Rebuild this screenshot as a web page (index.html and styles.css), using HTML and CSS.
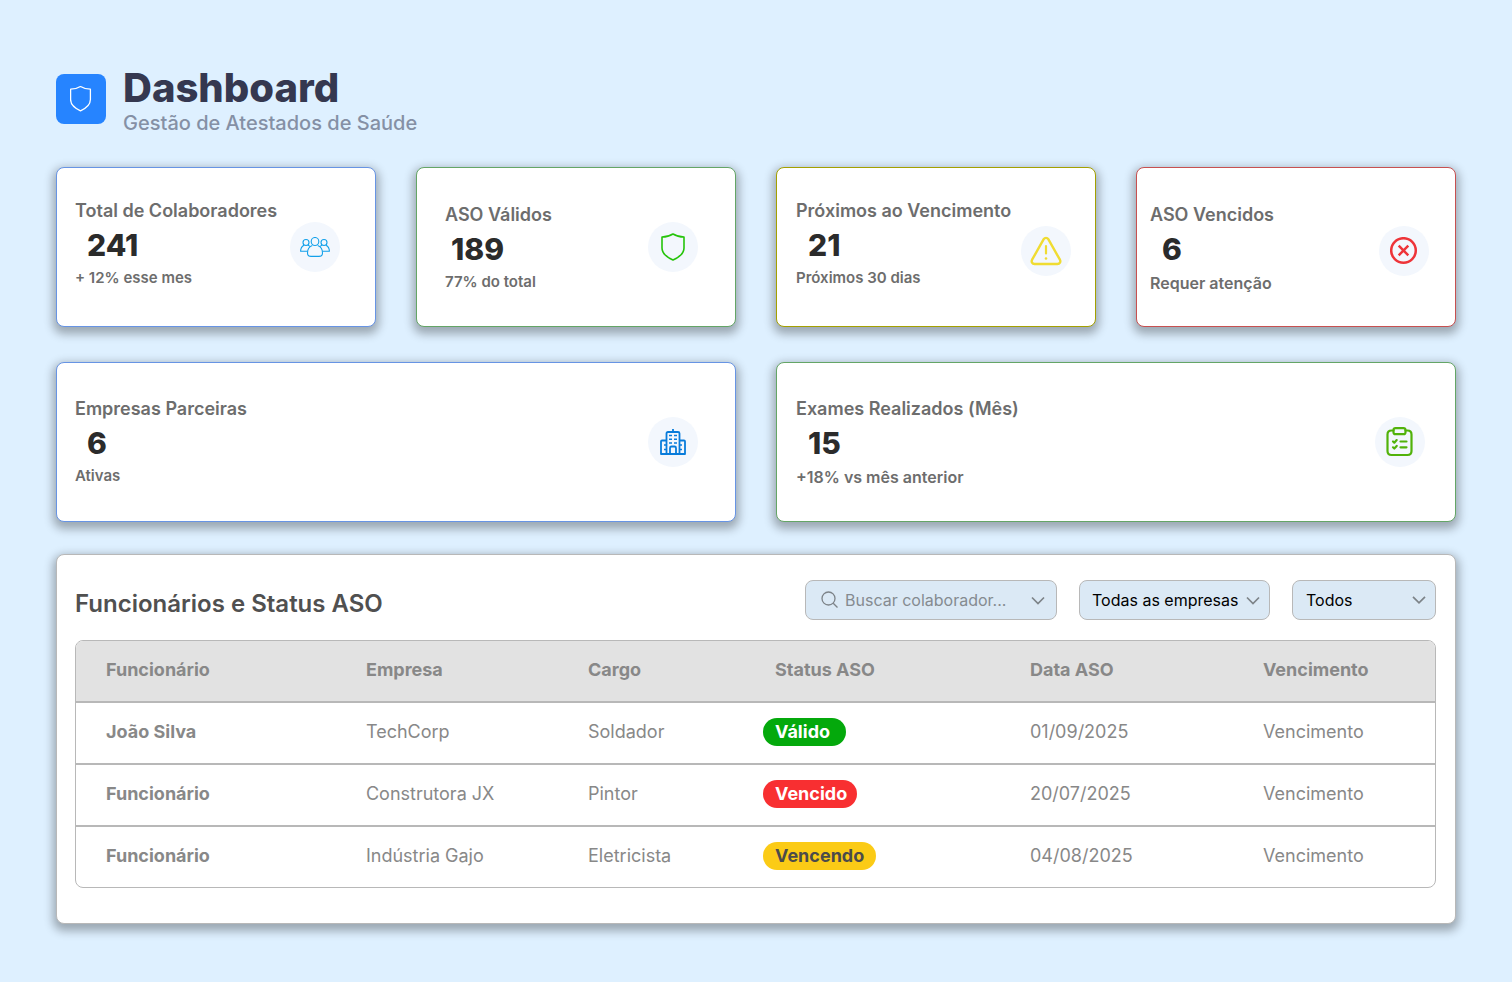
FILE: index.html
```html
<!DOCTYPE html>
<html lang="pt-BR">
<head>
<meta charset="utf-8">
<meta name="viewport" content="width=device-width, initial-scale=1">
<title>Dashboard</title>
<link rel="stylesheet" href="styles.css">
</head>
<body>
<main class="page">
  <header class="header">
    <div class="logo">
      <svg width="22" height="26" viewBox="0 0 22 26" fill="none" stroke="#fff" stroke-width="1.3" stroke-linejoin="round"><path d="M10.500.5C7.700 2.200 4.300 3.200.6 3.200V13.500c0 5.500 4.400 8.800 9.900 11.300C16 22.300 20.400 19 20.400 13.500V3.200C16.700 3.200 13.300 2.200 10.500.5z"/></svg>
    </div>
    <div>
      <h1 class="title">Dashboard</h1>
      <p class="subtitle">Gestão de Atestados de Saúde</p>
    </div>
  </header>

  <section class="cards">
    <article class="card card--blue card--total">
      <div class="info">
        <h2 class="label">Total de Colaboradores</h2>
        <p class="value">241</p>
        <p class="note">+ 12% esse mes</p>
      </div>
      <span class="badge-icon">
        <svg width="30" height="20" viewBox="0 0 30 20" fill="none" stroke="#12a0ea" stroke-width="1.1" stroke-linejoin="round"><ellipse cx="15" cy="4.500" rx="3.800" ry="4"/><circle cx="6" cy="5.500" r="3"/><circle cx="24" cy="5.500" r="3"/><path d="M12.300 8.600C9.500 9.700 7.500 12.500 7.500 16c0 2.200 1.300 3.400 3.500 3.400h8c2.200 0 3.500-1.200 3.500-3.400 0-3.500-2-6.300-4.800-7.400"/><path d="M4 8.200C2 9.200.6 11.200.6 14.300h7M8 8.200c1 .4 1.700.9 2.300 1.500M26 8.200c2 1 3.400 3 3.400 6.100h-7M22 8.200c-1 .4-1.700.9-2.300 1.500"/></svg>
      </span>
    </article>
    <article class="card card--green card--valid">
      <div class="info">
        <h2 class="label">ASO Válidos</h2>
        <p class="value">189</p>
        <p class="note">77% do total</p>
      </div>
      <span class="badge-icon">
        <svg width="24" height="28" viewBox="0 0 24 28" fill="none" stroke="#25c40a" stroke-width="1.600" stroke-linejoin="round"><path d="M12 1C9 2.900 5.200 4 1 4V15c0 6 5 9.300 11 12 6-2.700 11-6 11-12V4C18.800 4 15 2.900 12 1z"/></svg>
      </span>
    </article>
    <article class="card card--yellow card--soon">
      <div class="info">
        <h2 class="label">Próximos ao Vencimento</h2>
        <p class="value">21</p>
        <p class="note">Próximos 30 dias</p>
      </div>
      <span class="badge-icon badge-icon--low">
        <svg width="32" height="30" viewBox="0 0 32 30" fill="none" stroke="#f0dc32" stroke-width="2.400" stroke-linecap="round" stroke-linejoin="round"><path d="M13.700 3.200 2.100 23.700C1 25.900 2.200 28 4.600 28h22.800c2.400 0 3.600-2.100 2.500-4.300L18.300 3.200c-1.100-1.800-3.500-1.800-4.600 0z"/><path d="M16 10v7.500" stroke-width="2.200"/><circle cx="16" cy="22.500" r="1.300" fill="#f0dc32" stroke="none"/></svg>
      </span>
    </article>
    <article class="card card--red card--expired">
      <div class="info">
        <h2 class="label">ASO Vencidos</h2>
        <p class="value">6</p>
        <p class="note note--large">Requer atenção</p>
      </div>
      <span class="badge-icon badge-icon--low">
        <svg width="28" height="28" viewBox="0 0 28 28" fill="none" stroke="#ee3439" stroke-width="2.500"><circle cx="13.500" cy="13.500" r="12.300"/><path d="m8.700 8.700 9.600 9.600M18.300 8.700l-9.600 9.600"/></svg>
      </span>
    </article>
    <article class="card card--wide card--blue card--partners">
      <div class="info">
        <h2 class="label">Empresas Parceiras</h2>
        <p class="value">6</p>
        <p class="note">Ativas</p>
      </div>
      <span class="badge-icon">
        <svg width="26" height="26" viewBox="0 0 26 26" fill="none" stroke="#087cdb" stroke-width="1.800" stroke-linejoin="round"><path d="M13 0v3M6.500 25V4.500Q6.500 3 8 3h10q1.500 0 1.500 1.500V25M6.500 11.500H2q-1 0-1 1V25h24V12.500q0-1-1-1h-4.500M10 25v-6q0-1.500 1.500-1.500h3q1.500 0 1.500 1.500v6"/><path d="M9 6.500h3m2 0h3M9 10.300h3m2 0h3M9 14h3m2 0h3M4 16h2.500M4 20.500h2.500M22 16h-2.500M22 20.500h-2.500" stroke-width="1.500"/></svg>
      </span>
    </article>
    <article class="card card--wide card--green card--exams">
      <div class="info">
        <h2 class="label">Exames Realizados (Mês)</h2>
        <p class="value">15</p>
        <p class="note note--large">+18% vs mês anterior</p>
      </div>
      <span class="badge-icon">
        <svg width="28" height="30" viewBox="0 0 28 30" fill="none" stroke="#51b20a" stroke-width="2.200" stroke-linecap="round" stroke-linejoin="round"><path d="M7.500 3.500h-2Q1.500 3.500 1.500 7.500v16.500q0 4 4 4h16q4 0 4-4V7.500q0-4-4-4h-2"/><rect x="7.500" y="1.200" width="12" height="6" rx="2"/><path d="m7 14.500 1.300 1.200 2.400-2.600M7 20.300l1.300 1.200 2.400-2.600M14.500 14.500h6M14.500 20.300h6"/></svg>
      </span>
    </article>
  </section>

  <section class="panel">
    <div class="toolbar">
      <h2 class="panel-title">Funcionários e Status ASO</h2>
      <div class="filters">
        <div class="field field--search">
          <svg class="search-icon" width="18" height="18" viewBox="0 0 18 18" fill="none" stroke="#7d8388" stroke-width="1.300"><circle cx="7.500" cy="7.500" r="6.500"/><path d="m12.200 12.200 4.300 4.300"/></svg>
          <input class="search" type="text" placeholder="Buscar colaborador..." aria-label="Buscar colaborador">
          <svg class="chevron" width="14" height="10" viewBox="0 0 14 10" fill="none" stroke="#7d8388" stroke-width="1.700"><path d="m1 2.500 6 6 6-6"/></svg>
        </div>
        <div class="field field--company">
          <select class="select" aria-label="Empresa"><option>Todas as empresas</option></select>
          <svg class="chevron" width="14" height="10" viewBox="0 0 14 10" fill="none" stroke="#7d8388" stroke-width="1.700"><path d="m1 2.500 6 6 6-6"/></svg>
        </div>
        <div class="field field--status">
          <select class="select" aria-label="Status"><option>Todos</option></select>
          <svg class="chevron" width="14" height="8" viewBox="0 0 14 8" fill="none" stroke="#7d8388" stroke-width="1.700"><path d="m1 .8 6 6 6-6"/></svg>
        </div>
      </div>
    </div>
    <div class="table-box">
      <table class="table">
        <colgroup><col class="col-name"><col class="col-company"><col class="col-role"><col class="col-status"><col class="col-date"><col class="col-due"></colgroup>
        <thead>
          <tr><th scope="col">Funcionário</th><th scope="col">Empresa</th><th scope="col">Cargo</th><th scope="col" class="status-head">Status ASO</th><th scope="col">Data ASO</th><th scope="col">Vencimento</th></tr>
        </thead>
        <tbody>
          <tr><th scope="row">João Silva</th><td>TechCorp</td><td>Soldador</td><td><span class="pill pill--valid">Válido</span></td><td>01/09/2025</td><td>Vencimento</td></tr>
          <tr><th scope="row">Funcionário</th><td>Construtora JX</td><td>Pintor</td><td><span class="pill pill--expired">Vencido</span></td><td>20/07/2025</td><td>Vencimento</td></tr>
          <tr><th scope="row">Funcionário</th><td>Indústria Gajo</td><td>Eletricista</td><td><span class="pill pill--soon">Vencendo</span></td><td>04/08/2025</td><td>Vencimento</td></tr>
        </tbody>
      </table>
    </div>
  </section>
</main>
</body>
</html>
```

FILE: styles.css
```css
* {
  box-sizing: border-box;
}

body {
  margin: 0;
  background: #def0ff;
  font-family: Inter, "Liberation Sans", sans-serif;
}

h1, h2, p {
  margin: 0;
}

svg {
  display: block;
  flex: none;
}

.page {
  padding: 64px 56px 56px;
}

.header {
  display: flex;
  align-items: center;
  gap: 17px;
  margin-bottom: 33px;
}

.logo {
  display: grid;
  place-items: center;
  width: 50px;
  height: 50px;
  border-radius: 8px;
  background: #2684ff;
}

.title {
  font-size: 40px;
  line-height: 48px;
  font-weight: 800;
  color: #353850;
}

.subtitle {
  font-size: 20px;
  line-height: 22px;
  font-weight: 500;
  color: #8590a5;
}

.cards {
  display: grid;
  grid-template-columns: repeat(4, 1fr);
  gap: 35px 40px;
  margin-bottom: 32px;
}

.card,
.panel {
  border: 1px solid #b8b8b8;
  border-radius: 8px;
  background: #fff;
  box-shadow: 0 4px 10px 3px rgba(0, 0, 0, 0.3);
}

.card {
  display: flex;
  justify-content: space-between;
  min-height: 160px;
}

.card--wide {
  grid-column: span 2;
}

.card--blue { border-color: #6794e4; }
.card--green { border-color: #64a566; }
.card--yellow { border-color: #a4a000; }
.card--red { border-color: #c75050; }

.card--total { padding: 0 35px 0 18px; }
.card--valid { padding: 0 37px 0 28px; }
.card--soon { padding: 0 24px 0 19px; }
.card--expired { padding: 0 26px 0 13px; }
.card--partners { padding: 0 37px 0 18px; }
.card--exams { padding: 0 30px 0 19px; }

.info {
  padding-top: 29px;
}

.card--valid .info,
.card--expired .info {
  padding-top: 33px;
}

.card--wide .info {
  padding-top: 32px;
}

.label {
  font-size: 18px;
  line-height: 28px;
  font-weight: 600;
  color: #6d6d6d;
}

.value {
  padding-left: 12px;
  font-size: 30px;
  line-height: 40px;
  font-weight: 800;
  color: #2b2b2b;
}

.card--valid .value {
  padding-left: 6px;
}

.note {
  font-size: 15px;
  line-height: 26px;
  font-weight: 600;
  color: #6d6d6d;
}

.note--large {
  font-size: 16px;
  line-height: 28px;
}

.badge-icon {
  display: grid;
  place-items: center;
  align-self: center;
  width: 50px;
  height: 50px;
  border-radius: 50%;
  background: #f3f7fd;
}

.badge-icon--low {
  margin-top: 8px;
}

.panel {
  padding: 25px 19px 35px 18px;
}

.toolbar {
  display: flex;
  align-items: center;
  justify-content: space-between;
  margin-bottom: 20px;
}

.panel-title {
  padding-top: 8px;
  font-size: 24px;
  line-height: 30px;
  font-weight: 600;
  color: #505050;
}

.filters {
  display: flex;
  gap: 22px;
}

.field {
  display: grid;
  align-items: center;
  height: 40px;
  border: 1px solid #b8b8b8;
  border-radius: 8px;
  background: #dbe9f5;
}

.field--search {
  grid-template-columns: auto 1fr auto;
  gap: 6px;
  width: 252px;
  padding: 0 11px 0 15px;
}

.field--company { width: 191px; }
.field--status { width: 144px; }

.search,
.select {
  width: 100%;
  min-width: 0;
  height: 38px;
  padding: 0;
  border: 0;
  border-radius: 8px;
  background: transparent;
  font: 400 16px/20px Inter, "Liberation Sans", sans-serif;
  color: #000;
}

.search::placeholder {
  color: #858b90;
  opacity: 1;
}

.select {
  grid-area: 1 / 1;
  appearance: none;
  padding: 0 30px 0 12px;
}

.field--company .select {
  padding-right: 24px;
}

.field--status .select {
  padding-left: 13px;
}

.field--company .chevron,
.field--status .chevron {
  grid-area: 1 / 1;
  justify-self: end;
  margin-right: 9px;
  pointer-events: none;
}

.table-box {
  overflow: hidden;
  border: 1px solid #b8b8b8;
  border-radius: 8px;
}

.table {
  width: 100%;
  table-layout: fixed;
  border-collapse: separate;
  border-spacing: 0;
  font-size: 18px;
  line-height: 22px;
  color: #888;
}

.col-name { width: 19.13%; }
.col-company { width: 16.34%; }
.col-role { width: 12.88%; }
.col-status { width: 19.64%; }
.col-date { width: 17.15%; }
.col-due { width: 14.86%; }

.table th,
.table td {
  height: 62px;
  padding: 0 0 2px 30px;
  border-bottom: 2px solid #b8b8b8;
  text-align: left;
  font-weight: 400;
}

.table th {
  font-weight: 700;
}

.table thead th {
  background: #e2e2e2;
}

.table .status-head {
  padding-left: 42px;
}

.table tbody tr:last-child > * {
  height: 60px;
  border-bottom: 0;
}

.pill {
  display: inline-block;
  padding: 3px 12px;
  border-radius: 14px;
  font-weight: 700;
  color: #fff;
  vertical-align: middle;
}

.pill--valid {
  padding-right: 16px;
  background: #04a90c;
}

.pill--expired {
  padding-right: 10px;
  background: #f82f31;
}

.pill--soon {
  background: #fbcb16;
  color: #4b4b4b;
}
```
